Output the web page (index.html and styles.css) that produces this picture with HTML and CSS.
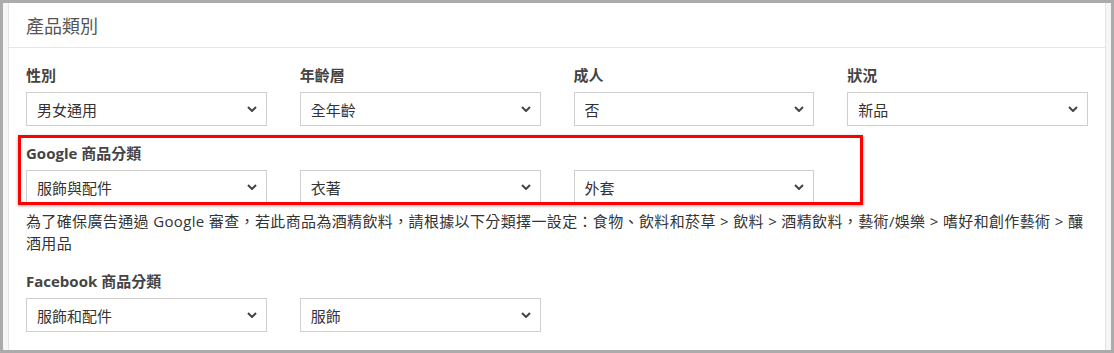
FILE: index.html
```html
<!DOCTYPE html>
<html lang="zh-Hant">
<head>
<meta charset="utf-8">
<title>產品類別</title>
<link rel="stylesheet" href="styles.css">
</head>
<body>
<div class="frame">
  <div class="card">
    <div class="card-header">產品類別</div>
    <div class="card-body">
      <div class="grid">
        <div class="field">
          <div class="label">性別</div>
          <div class="select"><span>男女通用</span><svg class="chev" viewBox="0 0 10 6"><path d="M1 1 L5 5 L9 1"/></svg></div>
        </div>
        <div class="field">
          <div class="label">年齡層</div>
          <div class="select"><span>全年齡</span><svg class="chev" viewBox="0 0 10 6"><path d="M1 1 L5 5 L9 1"/></svg></div>
        </div>
        <div class="field">
          <div class="label">成人</div>
          <div class="select"><span>否</span><svg class="chev" viewBox="0 0 10 6"><path d="M1 1 L5 5 L9 1"/></svg></div>
        </div>
        <div class="field">
          <div class="label">狀況</div>
          <div class="select"><span>新品</span><svg class="chev" viewBox="0 0 10 6"><path d="M1 1 L5 5 L9 1"/></svg></div>
        </div>
      </div>

      <div class="group google">
        <div class="highlight"></div>
        <div class="label">Google 商品分類</div>
        <div class="grid">
          <div class="select"><span>服飾與配件</span><svg class="chev" viewBox="0 0 10 6"><path d="M1 1 L5 5 L9 1"/></svg></div>
          <div class="select"><span>衣著</span><svg class="chev" viewBox="0 0 10 6"><path d="M1 1 L5 5 L9 1"/></svg></div>
          <div class="select"><span>外套</span><svg class="chev" viewBox="0 0 10 6"><path d="M1 1 L5 5 L9 1"/></svg></div>
        </div>
        <p class="help">為了確保廣告通過 Google 審查，若此商品為酒精飲料，請根據以下分類擇一設定：食物、飲料和菸草 &gt; 飲料 &gt; 酒精飲料，藝術/娛樂 &gt; 嗜好和創作藝術 &gt; 釀酒用品</p>
      </div>

      <div class="group">
        <div class="label">Facebook 商品分類</div>
        <div class="grid">
          <div class="select"><span>服飾和配件</span><svg class="chev" viewBox="0 0 10 6"><path d="M1 1 L5 5 L9 1"/></svg></div>
          <div class="select"><span>服飾</span><svg class="chev" viewBox="0 0 10 6"><path d="M1 1 L5 5 L9 1"/></svg></div>
        </div>
      </div>
    </div>
  </div>
</div>
</body>
</html>
```

FILE: styles.css
```css
html, body {
  margin: 0;
  padding: 0;
}
body {
  font-family: "Open Sans", "Noto Sans CJK TC", sans-serif;
  color: #333;
  background: #fff;
}
.frame {
  box-sizing: border-box;
  width: 1114px;
  height: 353px;
  border: 3px solid #ababab;
  background: #f6f6f6;
  padding: 0 5px;
  overflow: hidden;
}
.card {
  background: #fff;
  border: 1px solid #e4e4e4;
  border-top: none;
  height: 400px;
}
.card-header {
  height: 45px;
  box-sizing: border-box;
  padding: 0 17px;
  display: flex;
  align-items: center;
  font-size: 18px;
  color: #555;
  border-bottom: 1px solid #e6e6e6;
}
.card-body {
  padding: 17px 17px 0;
}
.grid {
  display: grid;
  grid-template-columns: repeat(4, 1fr);
  column-gap: 33px;
}
.label {
  font-size: 15px;
  line-height: 20px;
  font-weight: 700;
  color: #444;
  margin-bottom: 7px;
}
.select {
  box-sizing: border-box;
  height: 34px;
  border: 1px solid #cfcfcf;
  background: #fff;
  display: flex;
  align-items: center;
  justify-content: space-between;
  padding: 0 9px 0 10px;
  font-size: 15px;
  color: #333;
}
.chev {
  width: 10px;
  height: 6px;
  fill: none;
  stroke: #444;
  stroke-width: 2;
}
.group {
  position: relative;
  margin-top: 17px;
}
.highlight {
  position: absolute;
  left: -8px;
  top: -8px;
  width: 845px;
  height: 70px;
  box-sizing: border-box;
  border: 3px solid #ff0000;
  box-shadow: 0 1px 3px rgba(0, 0, 0, 0.35);
  pointer-events: none;
  z-index: 2;
}
.help {
  margin: 6px 0 0;
  font-size: 15px;
  line-height: 22px;
  letter-spacing: 0.36px;
  color: #333;
}
```
